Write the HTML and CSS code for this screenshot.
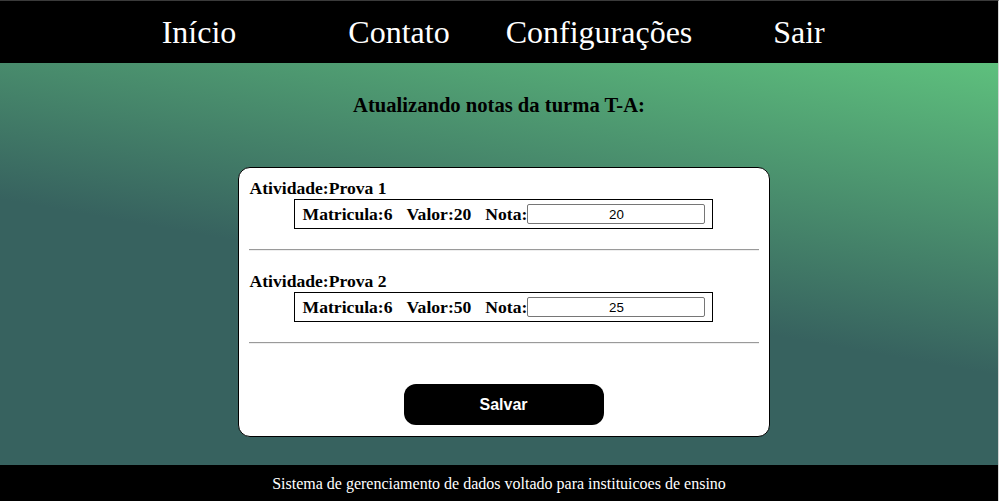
FILE: index.html
```html
<!DOCTYPE html>
<html lang="pt-BR">
<head>
<meta charset="utf-8">
<title>Atualizar notas</title>
<link rel="stylesheet" href="styles.css">
</head>
<body>
  <header class="topbar">
    <nav class="nav">
      <a class="nav-item" href="#">Início</a>
      <a class="nav-item" href="#">Contato</a>
      <a class="nav-item" href="#">Configurações</a>
      <a class="nav-item" href="#">Sair</a>
    </nav>
  </header>
  <main class="main">
    <h2 class="title">Atualizando notas da turma T-A:</h2>
    <form class="card">
      <div class="atividade">
        <div class="atividade-nome">Atividade:Prova 1</div>
        <div class="linha">
          <span class="campo">Matricula:6</span>
          <span class="campo">Valor:20</span>
          <span class="campo nota">Nota:<input class="nota-input" type="text" value="20"></span>
        </div>
      </div>
      <hr class="sep">
      <div class="atividade">
        <div class="atividade-nome">Atividade:Prova 2</div>
        <div class="linha">
          <span class="campo">Matricula:6</span>
          <span class="campo">Valor:50</span>
          <span class="campo nota">Nota:<input class="nota-input" type="text" value="25"></span>
        </div>
      </div>
      <hr class="sep">
      <div class="acoes">
        <button class="btn-salvar" type="button">Salvar</button>
      </div>
    </form>
  </main>
  <footer class="rodape">Sistema de gerenciamento de dados voltado para instituicoes de ensino</footer>
</body>
</html>
```

FILE: styles.css
```css
html, body {
  margin: 0;
  padding: 0;
  height: 100%;
}
body {
  display: flex;
  flex-direction: column;
  height: 501px;
  box-sizing: border-box;
  border-top: 1px solid #3a3a3a;
  border-right: 1px solid #d4d4d4;
  font-family: "Liberation Serif", "Times New Roman", serif;
  color: #000;
  overflow: hidden;
}
.topbar {
  background: #000;
  height: 62px;
  flex: none;
  display: flex;
  align-items: center;
}
.nav {
  display: flex;
  margin-left: 99px;
}
.nav-item {
  width: 200px;
  text-align: center;
  color: #fff;
  text-decoration: none;
  font-size: 32px;
  line-height: 36px;
}
.main {
  flex: 1;
  background: linear-gradient(10deg, #37625f 46%, #5ec07d 100%);
  display: flex;
  flex-direction: column;
  align-items: center;
  padding-left: 9px;
}
.title {
  margin: 30px 0 0 -9px;
  font-size: 20.6px;
  line-height: 24px;
  font-weight: bold;
}
.card {
  margin-top: 50px;
  width: 532px;
  height: 270px;
  box-sizing: border-box;
  background: #fff;
  border: 1px solid #000;
  border-radius: 12px;
  padding: 10px 11px 11px 11px;
  display: flex;
  flex-direction: column;
}
.atividade-nome {
  font-size: 17.6px;
  font-weight: bold;
  line-height: 21px;
}
.linha {
  align-self: center;
  display: flex;
  align-items: center;
  gap: 14px;
  height: 30px;
  box-sizing: border-box;
  border: 1px solid #000;
  padding: 0 7px 0 8px;
}
.campo {
  font-size: 17.6px;
  font-weight: bold;
  display: flex;
  align-items: center;
}
.atividade {
  display: flex;
  flex-direction: column;
}
.nota-input {
  width: 178px;
  height: 20px;
  box-sizing: border-box;
  border: 1px solid #767676;
  border-radius: 2px;
  padding: 1px 2px;
  margin: 0;
  font-family: "Liberation Sans", Arial, sans-serif;
  font-size: 13.33px;
  text-align: center;
  color: #000;
}
.sep {
  margin: 20px -1px 20px -1px;
  border: none;
  border-top: 1px solid #9a9a9a;
  border-bottom: 1px solid #eeeeee;
  height: 0;
}
.acoes {
  display: flex;
  justify-content: center;
  margin-top: 20px;
}
.btn-salvar {
  width: 200px;
  height: 41px;
  background: #000;
  color: #fff;
  border: none;
  border-radius: 12px;
  font-family: "Liberation Sans", Arial, sans-serif;
  font-weight: bold;
  font-size: 16px;
}
.rodape {
  flex: none;
  height: 36px;
  background: #000;
  color: #fff;
  font-size: 16px;
  text-align: center;
  line-height: 38px;
}
```
